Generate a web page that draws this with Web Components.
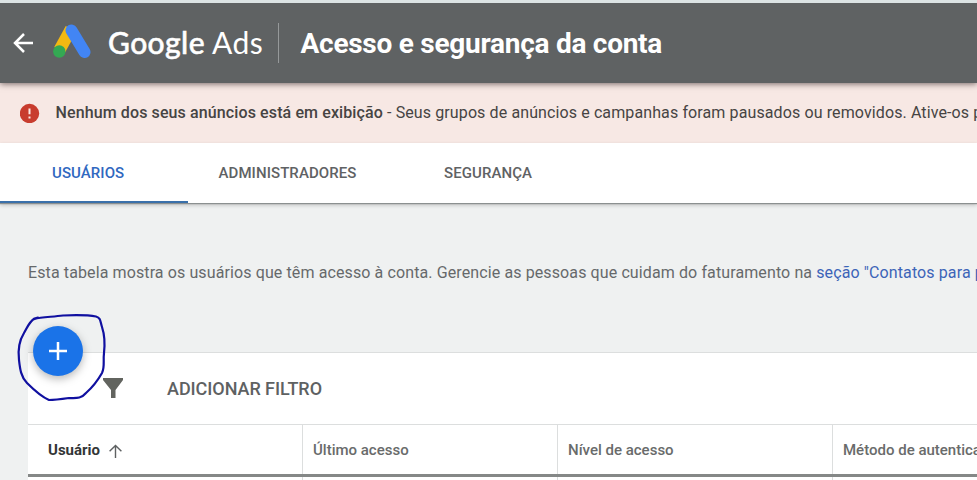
<!DOCTYPE html>
<html lang="pt-BR">
<head>
<meta charset="utf-8">
<title>Acesso e segurança da conta</title>
<style>
body{margin:0;width:977px;height:480px;overflow:hidden;font-family:Roboto,"Liberation Sans",sans-serif;font-size:16px;background:#eff1f1}
</style>
</head>
<body>
<ads-page></ads-page>
<script>
const define = (name, html) => customElements.define(name, class extends HTMLElement {
  constructor() {
    super();
    const t = document.createElement('template');
    t.innerHTML = html;
    this.attachShadow({mode: 'open'}).append(t.content.cloneNode(true));
  }
});

define('ads-header', `
<style>
:host{display:flex;align-items:center;box-sizing:border-box;height:83px;border-top:3px solid #dce3e4;background:#5f6263;color:#fff;position:relative;z-index:2;box-shadow:0 1px 6px rgba(50,35,35,.65);padding-left:12px}
svg{display:block;flex:none}
.back{width:22px;height:22px}
.logo{width:40px;height:36px;margin:0 0 7px 18px}
.brand{font:30px/36px Lato,sans-serif;margin:0 0 2px 16px;width:170px;white-space:nowrap;letter-spacing:.42px}
.brand b{font-weight:500;-webkit-text-stroke:.5px #fff}
.rule{width:1px;height:40px;background:#96999a}
h1{margin:2px 0 0 21.500px;font-size:28px;line-height:36px;font-weight:700;white-space:nowrap;letter-spacing:-.26px}
</style>
<svg class="back" viewBox="0 0 22 22" fill="none" stroke="#fff" stroke-width="2.5"><path d="M21 11H3M12 2L3 11l9 9"/></svg>
<svg class="logo" viewBox="0 0 40 36"><path d="M19 7L7.500 28" stroke="#f3b912" stroke-width="12"/><path d="M19.500 8.500L32.500 30" stroke="#4285f4" stroke-width="12" stroke-linecap="round"/><circle cx="7.300" cy="29.500" r="6.200" fill="#34a853"/></svg>
<span class="brand"><b>Google</b> Ads</span><span class="rule"></span>
<h1><slot></slot></h1>`);

define('ads-alert', `
<style>
:host{display:flex;align-items:center;height:60px;background:#f7e8e4;color:#464443;padding-left:20px;gap:15.500px;white-space:nowrap;font-size:16px;line-height:24px;letter-spacing:.112px}
svg{flex:none;width:20px;height:20px}
</style>
<svg viewBox="0 0 20 20"><circle cx="9.500" cy="10.500" r="9.700" fill="#c83c2e"/><path d="M9.500 5.500v5.700M9.500 13.500v2" stroke="#fbe9e5" stroke-width="2"/></svg>
<span><slot></slot></span>`);

define('ads-tab', `
<style>
:host{display:flex;align-items:center;height:60px;box-sizing:border-box;padding-bottom:1px;font-size:15px;font-weight:500;color:#5f6264;white-space:nowrap;letter-spacing:.08px}
:host([selected]){color:#3068c0;border-bottom:2px solid #3a70aa;padding-bottom:0;padding-top:1px}
</style><slot></slot>`);

define('ads-tabs', `
<style>
:host{display:grid;grid-template-columns:188px 225px 1fr;height:60px;background:#fff;position:relative;box-shadow:0 1px 1px #8b9090,0 2px 4px rgba(0,0,0,.22)}
</style><slot></slot>`);

define('ads-filter', `
<style>
:host{display:flex;align-items:center;height:71px;border-top:1px solid #dcdede;padding-left:75px;font-size:18px;font-weight:500;color:#5e6162;letter-spacing:-.06px}
svg{width:20px;height:20px;margin:0 44px 2px 0;flex:none}
</style>
<svg viewBox="0 0 20 20"><path d="M0 0H20V2L12.500 12V20H8V12L0 2Z" fill="#62645f"/></svg><span><slot></slot></span>`);

define('ads-column', `
<style>
:host{display:flex;align-items:center;gap:9.500px;font-size:15px;font-weight:500;color:#696b6b;padding-left:10px;border-left:1px solid #dcdede;white-space:nowrap;padding-bottom:6px;box-sizing:border-box;height:56px}
:host([sorted]){color:#333637;padding-left:20px;border-left:0;font-weight:700}
svg{display:none;width:13px;height:14px;margin-top:2px}
:host([sorted]) svg{display:block}
</style>
<slot></slot><svg viewBox="0 0 13 14" fill="none" stroke="#5e6162" stroke-width="1.400"><path d="M6.500 14V1.500M.6 7.300L6.500 1.400l5.900 5.900"/></svg>`);

define('ads-columns', `
<style>
:host{display:grid;grid-template-columns:274px 255px 275px 1fr;height:56px;border-top:1px solid #dcdede;position:relative}
:host::after{content:"";position:absolute;left:0;right:0;top:49px;height:3px;background:#858887}
</style><slot></slot>`);

define('ads-fab', `
<style>
:host{position:absolute;left:14px;top:312px;width:96px;height:92px;z-index:3}
svg{display:block;overflow:visible}
.disc{filter:drop-shadow(0 3px 4px rgba(0,0,0,.28))}
</style>
<svg width="96" height="92" viewBox="14 312 96 92" fill="none">
<circle class="disc" cx="58" cy="351" r="25" fill="#1a73e8"/>
<path d="M49 351H67M58 342V360" stroke="#fff" stroke-width="2.500"/>
<path d="M34.500 319C41 317 52 317 63 315.500C76 315 88 315 96 316.500C101 318 100 321 102 327C105 336 105 344 104 353C103 361 105 367 102 373C98 380 94 386 86 393C81 399 76 398 69 398C62 399 55 400 49 400C42 397 35 391 27 383C21 377 20 369 19 360C18 352 19 341 24 333C27 328 29 322 34.500 318.500L38 317.500" stroke="#1010a0" stroke-width="2.200" stroke-linecap="round" stroke-linejoin="round"/>
</svg>`);

define('ads-page', `
<style>
:host{display:block;width:977px;height:480px;overflow:hidden;position:relative}
b{font-weight:500}
p{margin:0;padding:58px 0 0 28px;height:91px;font-size:16px;line-height:24px;color:#66696b;white-space:nowrap;letter-spacing:.11px}
a{color:#3c64b8}
section{margin-left:28px;background:#fff;width:949px;overflow:hidden}
.u{padding-left:52px}.a{padding-left:30.500px}.s{padding-left:31px}
</style>
<ads-header>Acesso e segurança da conta</ads-header>
<ads-alert><b>Nenhum dos seus anúncios está em exibição</b> - Seus grupos de anúncios e campanhas foram pausados ou removidos. Ative-os p</ads-alert>
<ads-tabs><ads-tab class="u" selected>USUÁRIOS</ads-tab><ads-tab class="a">ADMINISTRADORES</ads-tab><ads-tab class="s">SEGURANÇA</ads-tab></ads-tabs>
<p>Esta tabela mostra os usuários que têm acesso à conta. Gerencie as pessoas que cuidam do faturamento na <a>seção "Contatos para p</a></p>
<section>
<ads-filter>ADICIONAR FILTRO</ads-filter>
<ads-columns><ads-column sorted>Usuário</ads-column><ads-column>Último acesso</ads-column><ads-column>Nível de acesso</ads-column><ads-column>Método de autentica</ads-column></ads-columns>
</section>
<ads-fab></ads-fab>`);
</script>
</body>
</html>
